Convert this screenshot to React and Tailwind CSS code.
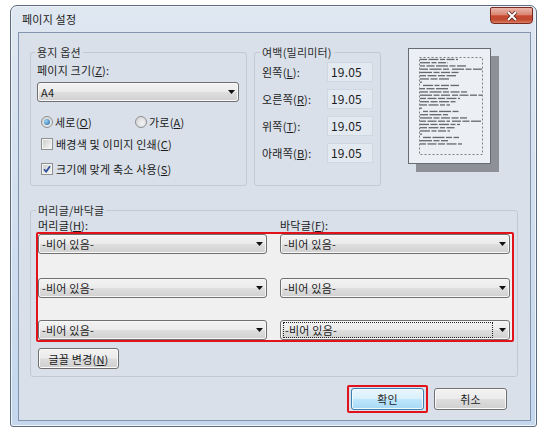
const Arrow = () => (
  <svg width="7" height="4" viewBox="0 0 7 4" className="shrink-0">
    <path d="M0 0h7L3.5 4z" fill="#111" />
  </svg>
);

const Combo = ({ children, className = '', focus = false }) => (
  <div className={`flex items-center justify-between h-[20px] rounded-[3px] border border-[#707070] bg-[linear-gradient(#f3f3f3,#ebebeb_48%,#dedede_52%,#d0d0d0)] shadow-[inset_0_0_0_1px_#f8f8f8] pl-[2px] pr-[3px] ${className}`}>
    {focus ? (
      <span className="w-[210px] h-[16px] border border-dotted border-[#222] leading-[14px] pl-px">{children}</span>
    ) : (
      <span className="pl-px">{children}</span>
    )}
    <Arrow />
  </div>
);

const Btn = ({ children, className = '' }) => (
  <div className={`flex items-center justify-center rounded-[3px] border border-[#707070] bg-[linear-gradient(#f2f2f2,#ebebeb_48%,#dddddd_52%,#cfcfcf)] shadow-[inset_0_0_0_1px_#fbfbfb] ${className}`}>
    {children}
  </div>
);

const Radio = ({ checked }) => (
  <span className="w-[12px] h-[12px] rounded-full border border-[#8e8f8f] bg-[radial-gradient(circle_at_60%_60%,#f4f4f4,#cfcfcf)] flex items-center justify-center shrink-0">
    {checked && (
      <span className="w-[6px] h-[6px] rounded-full bg-[radial-gradient(circle_at_35%_35%,#9fd6f7,#1c5f9e)]" />
    )}
  </span>
);

const Check = ({ checked }) => (
  <span className="w-[12px] h-[12px] border border-[#8e8f8f] bg-[#f4f4f4] p-[1px] shrink-0">
    <span className="block w-full h-full bg-[linear-gradient(135deg,#cfcfcf,#f4f4f4)]">
      {checked && (
        <svg width="8" height="8" viewBox="0 0 8 8">
          <path d="M1 4.2 L3.2 6.6 L7 1.2" stroke="#2b4e98" strokeWidth="1.7" fill="none" />
        </svg>
      )}
    </span>
  </span>
);

const Field = ({ value }) => (
  <div className="w-[46px] h-[20px] bg-[#e3e9f0] border border-[#cfd7e1] pl-[3px] flex items-center text-[12px]">
    {value}
  </div>
);

// preview page text lines
const group = [
  [[0, 38]], [[0, 28]], [[0, 47]], [[0, 30], [32, 30]], [[0, 40]], [[0, 36]], [[0, 30]], [[0, 2]],
];
const lines = [
  ...group,
  [[3, 36]], ...group.slice(1),
  [[3, 36]], ...group.slice(1),
  [[3, 36]], [[0, 28]], [[0, 42]],
];
const wordSizes = [7, 10, 5, 8, 12, 6, 9];

// break a line into little word blocks
const words = (x, w, seed) => {
  const out = [];
  let pos = x;
  let k = seed;
  while (pos < x + w) {
    const len = Math.min(wordSizes[k % wordSizes.length], x + w - pos);
    out.push([pos, len]);
    pos += len + 1.5;
    k += 1;
  }
  return out;
};

const Preview = () => (
  <div className="w-[83px] h-[116px] border border-[#676b72] bg-[#eceff4] shadow-[8px_8px_0_#8d9197]">
    <svg width="81" height="114" viewBox="0 0 81 114">
      <rect x="10.5" y="8.5" width="63" height="97" fill="none" stroke="#7d8086" strokeDasharray="2 2" />
      {lines.map((row, i) =>
        row.map(([x, w], j) =>
          words(x, w, i + j).map(([wx, ww], n) => (
            <rect key={`${i}-${j}-${n}`} x={11 + wx} y={9.8 + i * 3.25} width={ww} height="1.3" fill="#2e3033" opacity="0.7" />
          ))
        )
      )}
    </svg>
  </div>
);

const Legend = ({ children }) => (
  <legend className="px-[2px] -ml-[2px] leading-[16px] text-[#2c2c2c]">{children}</legend>
);

export default function App() {
  return (
    <div className="w-[547px] h-[435px] bg-white pt-[5px] pl-[10px] font-['Noto_Sans_CJK_KR',sans-serif] text-[11px] leading-[16px] tracking-[0.2px] text-[#1b1b1b]">
      <div className="w-[527px] h-[422px] rounded-t-[7px] rounded-b-[3px] border border-[#5d6c7e] bg-[linear-gradient(#dfe7f1,#c4d7ed)] shadow-[inset_0_0_0_1px_#eef3f9] flex flex-col">
        {/* title bar */}
        <div className="h-[26px] flex justify-between shrink-0">
          <span className="pl-[11px] pt-[5px]">페이지 설정</span>
          <div className="mt-[1px] mr-[3px] w-[43px] h-[17px] rounded-t-[2px] rounded-b-[4px] border border-[#7a2b21] bg-[linear-gradient(#ebb6aa,#d98572_45%,#c8492f_52%,#c24a32_78%,#da7e62)] flex items-center justify-center">
            <svg width="12" height="10" viewBox="0 0 12 10">
              <path d="M2 1 L10 9 M10 1 L2 9" stroke="#5a2018" strokeWidth="3.6" />
              <path d="M2 1 L10 9 M10 1 L2 9" stroke="#fff" strokeWidth="2" />
            </svg>
          </div>
        </div>

        {/* client area */}
        <div className="ml-[7px] mr-[5px] h-[389px] border border-[#8196ae] bg-[#d9e0e9] pl-[11px] pt-[11px]">
          <div className="flex h-[142px]">
            {/* paper options */}
            <fieldset className="w-[217px] border border-[#c1c9d3] rounded-[3px] pl-[6px]">
              <Legend>용지 옵션</Legend>
              <div className="mt-[2px]">페이지 크기(<u>Z</u>):</div>
              <Combo className="mt-[4px] w-[202px]">A4</Combo>
              <div className="mt-[12px] flex items-center h-[16px] pl-[4px]">
                <Radio checked />
                <span className="ml-[2px] w-[80px]">세로(<u>O</u>)</span>
                <Radio />
                <span className="ml-[2px]">가로(<u>A</u>)</span>
              </div>
              <div className="mt-[6px] flex items-center h-[16px] pl-[4px]">
                <Check />
                <span className="ml-[3px]">배경색 및 이미지 인쇄(<u>C</u>)</span>
              </div>
              <div className="mt-[9px] flex items-center h-[16px] pl-[4px]">
                <Check checked />
                <span className="ml-[3px]">크기에 맞게 축소 사용(<u>S</u>)</span>
              </div>
            </fieldset>

            {/* margins */}
            <fieldset className="ml-[7px] w-[127px] border border-[#c1c9d3] rounded-[3px] pl-[7px] pr-[7px]">
              <Legend>여백(밀리미터)</Legend>
              <div className="mt-[2px] flex flex-col gap-[7px]">
                <div className="flex items-center justify-between">
                  <span>왼쪽(<u>L</u>):</span>
                  <Field value="19.05" />
                </div>
                <div className="flex items-center justify-between">
                  <span>오른쪽(<u>R</u>):</span>
                  <Field value="19.05" />
                </div>
                <div className="flex items-center justify-between">
                  <span>위쪽(<u>T</u>):</span>
                  <Field value="19.05" />
                </div>
                <div className="flex items-center justify-between">
                  <span>아래쪽(<u>B</u>):</span>
                  <Field value="19.05" />
                </div>
              </div>
            </fieldset>

            <div className="ml-[27px] mt-[4px]">
              <Preview />
            </div>
          </div>

          {/* header / footer */}
          <fieldset className="mt-[16px] w-[488px] border border-[#c1c9d3] rounded-[3px] pl-[7px] pb-[7px]">
            <Legend>머리글/바닥글</Legend>
            <div className="flex h-[14px] leading-[14px]">
              <span className="w-[242px]">머리글(<u>H</u>):</span>
              <span>바닥글(<u>F</u>):</span>
            </div>
            <div className="-ml-[2px] w-[478px] border-2 border-[#e0121c] rounded-[2px] bg-[#f0f0f0]">
              <div className="flex gap-[13px]">
                <Combo className="w-[229px]">-비어 있음-</Combo>
                <Combo className="w-[230px]">-비어 있음-</Combo>
              </div>
              <div className="mt-[24px] flex gap-[13px]">
                <Combo className="w-[229px]">-비어 있음-</Combo>
                <Combo className="w-[230px]">-비어 있음-</Combo>
              </div>
              <div className="mt-[22px] flex gap-[13px]">
                <Combo className="w-[229px]">-비어 있음-</Combo>
                <Combo className="w-[230px]" focus>-비어 있음-</Combo>
              </div>
            </div>
            <Btn className="mt-[6px] w-[81px] h-[21px]">글꼴 변경(<u>N</u>)</Btn>
          </fieldset>

          {/* dialog buttons */}
          <div className="mt-[8px] flex items-center justify-end pr-[23px]">
            <div className="border-2 border-[#e0121c] rounded-[2px] px-[2px] py-[1px]">
              <div className="w-[73px] h-[22px] flex items-center justify-center rounded-[3px] border border-[#3c7fb1] bg-[linear-gradient(#eaf6fd,#d9f0fc_48%,#bee6fd_52%,#a7d9f5)] shadow-[inset_0_0_0_1px_#f2fafe]">
                확인
              </div>
            </div>
            <Btn className="ml-[6px] w-[73px] h-[22px]">취소</Btn>
          </div>
        </div>
      </div>
    </div>
  );
}
